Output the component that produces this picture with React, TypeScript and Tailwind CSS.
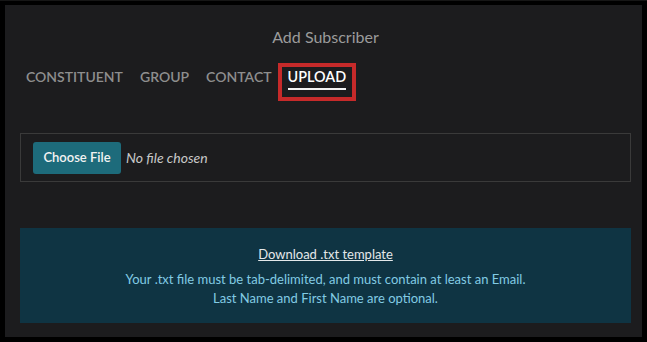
import { useState } from 'react'

const tabs = ['CONSTITUENT', 'GROUP', 'CONTACT', 'UPLOAD']

export default function App() {
  const [active, setActive] = useState('UPLOAD')

  return (
    <div className="h-[342px] w-[647px] border-t border-t-[#161616] bg-black px-[5px] pb-[5px] pt-[4px] font-['Lato','Liberation_Sans',sans-serif]">
      <div className="flex h-full flex-col bg-[#1c1c1e] pl-[15px] pr-[11px]">
        <div className="pt-[22px] text-center text-[16px] leading-[20px] text-[#9b9b9b]">
          Add Subscriber
        </div>

        <div className="mt-[16px] flex items-start gap-[17px] pl-[6px]">
          {tabs.map((tab) =>
            tab === active ? (
              <div
                className="-ml-[11px] border-4 border-[#c62a2a] pb-[7px] pl-[6px] pr-[6px] pt-[1px]"
                key={tab}
              >
                <div className="border-b-2 border-[#f4f4f4] pb-[3px] text-[14.4px] font-semibold leading-[17px] text-white">
                  {tab}
                </div>
              </div>
            ) : (
              <button
                className="pt-[5px] text-[14px] font-semibold leading-[17px] text-[#8e8e8e]"
                key={tab}
                onClick={() => setActive(tab)}
              >
                {tab}
              </button>
            ),
          )}
        </div>

        <div className="mt-[32px] flex h-[49px] items-center gap-[5px] border border-[#3a3a3a] pl-[12px]">
          <span className="flex h-[32px] w-[88px] items-center justify-center rounded-[3px] bg-[#1d6b7b] text-[13px] font-semibold text-[#f2f2f2]">
            Choose File
          </span>
          <span className="text-[14px] italic text-[#c8c8c8]">
            No file chosen
          </span>
        </div>

        <div className="mt-auto mb-[14px] flex h-[95px] flex-col items-center justify-center bg-[#0f3443] pt-[2px] text-[13px] leading-[19px]">
          <a className="mb-[6px] text-[#e4e8ea] underline" href="#">
            Download .txt template
          </a>
          <p className="text-[#82cbe4]">
            Your .txt file must be tab-delimited, and must contain at least an Email.
          </p>
          <p className="text-[#82cbe4]">Last Name and First Name are optional.</p>
        </div>
      </div>
    </div>
  )
}
